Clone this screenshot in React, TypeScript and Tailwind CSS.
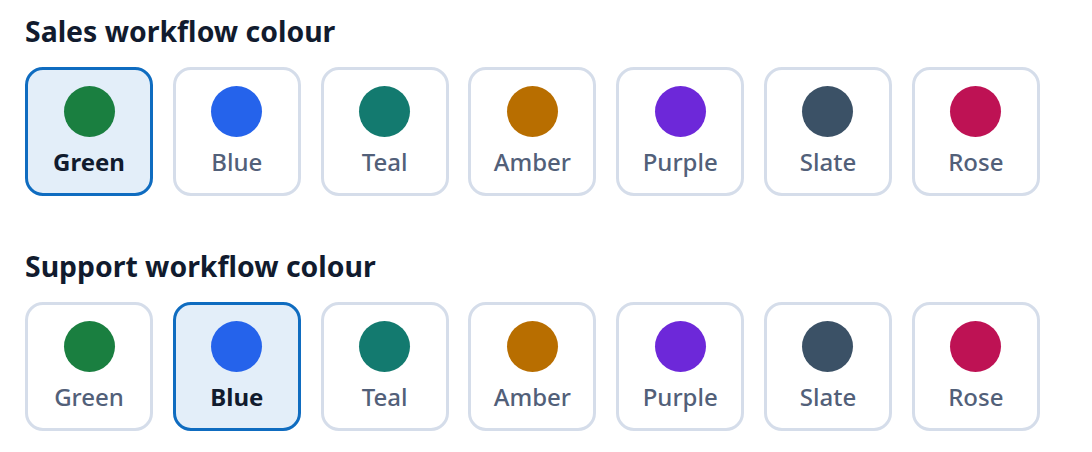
import { useState } from 'react';

type Swatch = { name: string; dot: string };

const swatches: Swatch[] = [
    { name: 'Green', dot: 'bg-[#1a7f40]' },
    { name: 'Blue', dot: 'bg-[#2563eb]' },
    { name: 'Teal', dot: 'bg-[#137a6f]' },
    { name: 'Amber', dot: 'bg-[#b86e00]' },
    { name: 'Purple', dot: 'bg-[#6d28d9]' },
    { name: 'Slate', dot: 'bg-[#3b5166]' },
    { name: 'Rose', dot: 'bg-[#be1254]' },
];

const ColourPicker = ({ title, initial }: { title: string; initial: string }) => {
    const [selected, setSelected] = useState(initial);

    return (
        <section className="flex flex-col gap-[18px]">
            <h2 className="text-[28.4px] leading-[36px] font-bold text-[#111b2e]">{title}</h2>
            <div role="radiogroup" aria-label={title} className="flex gap-[19.8px]">
                {swatches.map((s) => {
                    const active = s.name === selected;
                    return (
                        <button
                            key={s.name}
                            type="button"
                            role="radio"
                            aria-checked={active}
                            onClick={() => setSelected(s.name)}
                            className={
                                active
                                    ? 'w-[128px] flex flex-col items-center gap-[9px] pt-4 pb-[15px] px-4 rounded-[18px] border-[3px] border-[#0f6cc0] bg-[#e3eef9]'
                                    : 'w-[128px] flex flex-col items-center gap-[9px] pt-4 pb-[15px] px-4 rounded-[18px] border-[3px] border-[#d5ddea] bg-white'
                            }
                        >
                            <span className={`block w-[51px] h-[51px] rounded-full ${s.dot}`} />
                            <span
                                className={
                                    active
                                        ? 'text-[24px] leading-[32px] font-bold text-[#111b2e]'
                                        : 'text-[24px] leading-[32px] font-medium text-[#526079]'
                                }
                            >
                                {s.name}
                            </span>
                        </button>
                    );
                })}
            </div>
        </section>
    );
};

const App = () => {
    return (
        <div
            className="min-h-screen bg-white pt-[13px] pl-[25px] flex flex-col gap-[52px]"
            style={{ fontFamily: '"Noto Sans", "Open Sans", sans-serif' }}
        >
            <ColourPicker title="Sales workflow colour" initial="Green" />
            <ColourPicker title="Support workflow colour" initial="Blue" />
        </div>
    );
};

export default App;
